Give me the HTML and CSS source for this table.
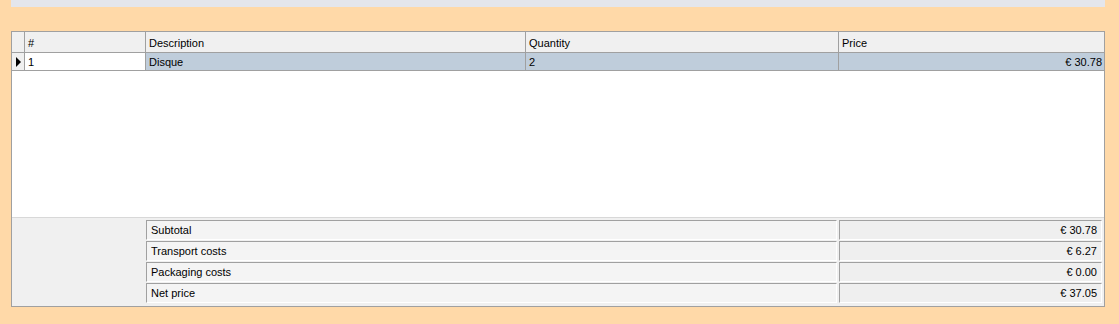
FILE: index.html
```html
<!DOCTYPE html>
<html>
<head>
<meta charset="utf-8">
<link rel="stylesheet" href="styles.css">
</head>
<body>
<div class="topbar"></div>
<div class="grid">
  <div class="row header">
    <div class="cell sel"></div>
    <div class="cell c1">#</div>
    <div class="cell c2">Description</div>
    <div class="cell c3">Quantity</div>
    <div class="cell c4">Price</div>
  </div>
  <div class="row data">
    <div class="cell sel"><span class="arrow"></span></div>
    <div class="cell c1 current">1</div>
    <div class="cell c2">Disque</div>
    <div class="cell c3">2</div>
    <div class="cell c4 num">€ 30.78</div>
  </div>
  <div class="empty"></div>
  <div class="footer">
    <div class="frow"><div class="flabel">Subtotal</div><div class="fvalue">€ 30.78</div></div>
    <div class="frow"><div class="flabel">Transport costs</div><div class="fvalue">€ 6.27</div></div>
    <div class="frow"><div class="flabel">Packaging costs</div><div class="fvalue">€ 0.00</div></div>
    <div class="frow"><div class="flabel">Net price</div><div class="fvalue">€ 37.05</div></div>
  </div>
</div>
</body>
</html>
```
FILE: styles.css
```css
html, body {
  margin: 0;
  padding: 0;
  background: #ffd9a8;
  font-family: "Liberation Sans", Arial, sans-serif;
  font-size: 11px;
  color: #000;
}
.topbar {
  margin-left: 11px;
  width: 1094px;
  height: 7px;
  background: #e4e6ec;
}
.grid {
  margin-top: 24px;
  margin-left: 11px;
  width: 1094px;
  border: 1px solid #a0a0a0;
  box-sizing: border-box;
  background: #fff;
  display: flex;
  flex-direction: column;
}
.row {
  display: grid;
  grid-template-columns: 13px 121px 380px 313px 1fr;
  border-bottom: 1px solid #a0a0a0;
}
.header { height: 20px; background: #f0f0f0; }
.data { height: 17px; background: #bfcddb; }
.cell {
  border-right: 1px solid #a0a0a0;
  padding-left: 3px;
  display: flex;
  align-items: center;
  white-space: nowrap;
  overflow: hidden;
}
.cell.c4 { border-right: none; }
.header .cell { padding-top: 1px; }
.cell.sel { padding-left: 0; background: #f0f0f0; justify-content: center; }
.current { background: #fff; }
.num { justify-content: flex-end; padding-right: 2px; }
.arrow {
  width: 0;
  height: 0;
  border-top: 5px solid transparent;
  border-bottom: 5px solid transparent;
  border-left: 5px solid #000;
  margin-left: 1px;
}
.empty { height: 146px; background: #fff; border-bottom: 1px solid #d8d8d8; }
.footer {
  background: #f0f0f0;
  padding: 2px 2px 3px 134px;
  display: flex;
  flex-direction: column;
  gap: 1px;
}
.frow {
  display: grid;
  grid-template-columns: 691px 1fr;
  gap: 2px;
  height: 20px;
}
.flabel, .fvalue {
  border-top: 1px solid #a0a0a0;
  border-left: 1px solid #a0a0a0;
  border-bottom: 1px solid #fff;
  border-right: 1px solid #fff;
  background: #f4f4f4;
  display: flex;
  align-items: center;
  box-sizing: border-box;
  white-space: nowrap;
}
.flabel { padding-left: 4px; }
.fvalue { justify-content: flex-end; padding-right: 4px; background: #efefef; }
```
